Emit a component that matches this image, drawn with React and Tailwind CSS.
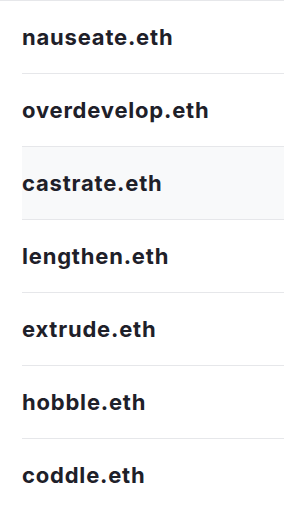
const names = [
  'nauseate.eth',
  'overdevelop.eth',
  'castrate.eth',
  'lengthen.eth',
  'extrude.eth',
  'hobble.eth',
  'coddle.eth',
];

export default function App() {
  return (
    <div className="w-[284px] h-[510px] overflow-hidden bg-white border-t border-[#e6e7ea]" style={{ fontFamily: 'Inter, "Noto Sans", sans-serif' }}>
      <ul className="pl-[22px]">
        {names.map((name, i) => (
          <li
            key={name}
            className={`h-[73px] flex items-center border-b border-[#e6e7ea] ${i === 2 ? 'bg-[#f8f9fa]' : ''}`}
          >
            <span className="text-[22px] leading-none font-bold text-[#1e2029] tracking-[0.8px]">{name}</span>
          </li>
        ))}
      </ul>
    </div>
  );
}
